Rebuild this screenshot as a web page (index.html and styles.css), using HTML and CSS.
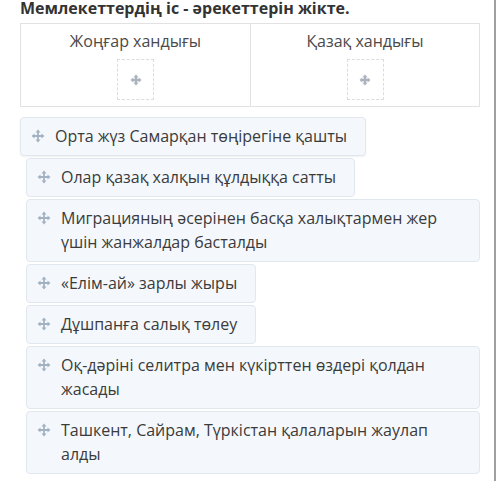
FILE: index.html
```html
<!DOCTYPE html>
<html lang="kk">
<head>
    <meta charset="UTF-8">
    <meta name="viewport" content="width=device-width, initial-scale=1.0">
    <title>Мемлекеттердің іс - әрекеттерін жікте</title>
    <link rel="stylesheet" href="styles.css">
</head>
<body>
    <div class="page">
        <h1 class="question">Мемлекеттердің іс - әрекеттерін жікте.</h1>

        <!-- Категориялар -->
        <div class="categories">
            <div class="category">
                <div class="category-title">Жоңғар хандығы</div>
                <div class="drop-zone">
                    <svg class="drop-icon" viewBox="0 0 12 12"><path d="M6 0.5 L8.5 3.2 H3.5 Z M6 11.5 L3.5 8.8 H8.5 Z M0.5 6 L3.2 3.5 V8.5 Z M11.5 6 L8.8 8.5 V3.5 Z M4.8 3 H7.2 V9 H4.8 Z M3 4.8 H9 V7.2 H3 Z"/></svg>
                </div>
            </div>
            <div class="category">
                <div class="category-title">Қазақ хандығы</div>
                <div class="drop-zone">
                    <svg class="drop-icon" viewBox="0 0 12 12"><path d="M6 0.5 L8.5 3.2 H3.5 Z M6 11.5 L3.5 8.8 H8.5 Z M0.5 6 L3.2 3.5 V8.5 Z M11.5 6 L8.8 8.5 V3.5 Z M4.8 3 H7.2 V9 H4.8 Z M3 4.8 H9 V7.2 H3 Z"/></svg>
                </div>
            </div>
        </div>

        <!-- Жауаптар -->
        <div class="items">
            <div class="item dragging">
                <svg class="move" viewBox="0 0 14 14"><path d="M7 0.5 L9.5 3.5 H4.5 Z M7 13.5 L4.5 10.5 H9.5 Z M0.5 7 L3.5 4.5 V9.5 Z M13.5 7 L10.5 9.5 V4.5 Z M6.1 3.5 H7.9 V10.5 H6.1 Z M3.5 6.1 H10.5 V7.9 H3.5 Z"/></svg>
                <span>Орта жүз Самарқан төңірегіне қашты</span>
            </div>
            <div class="item">
                <svg class="move" viewBox="0 0 14 14"><path d="M7 0.5 L9.5 3.5 H4.5 Z M7 13.5 L4.5 10.5 H9.5 Z M0.5 7 L3.5 4.5 V9.5 Z M13.5 7 L10.5 9.5 V4.5 Z M6.1 3.5 H7.9 V10.5 H6.1 Z M3.5 6.1 H10.5 V7.9 H3.5 Z"/></svg>
                <span>Олар қазақ халқын құлдыққа сатты</span>
            </div>
            <div class="item wide">
                <svg class="move" viewBox="0 0 14 14"><path d="M7 0.5 L9.5 3.5 H4.5 Z M7 13.5 L4.5 10.5 H9.5 Z M0.5 7 L3.5 4.5 V9.5 Z M13.5 7 L10.5 9.5 V4.5 Z M6.1 3.5 H7.9 V10.5 H6.1 Z M3.5 6.1 H10.5 V7.9 H3.5 Z"/></svg>
                <span>Миграцияның әсерінен басқа халықтармен жер үшін жанжалдар басталды</span>
            </div>
            <div class="item">
                <svg class="move" viewBox="0 0 14 14"><path d="M7 0.5 L9.5 3.5 H4.5 Z M7 13.5 L4.5 10.5 H9.5 Z M0.5 7 L3.5 4.5 V9.5 Z M13.5 7 L10.5 9.5 V4.5 Z M6.1 3.5 H7.9 V10.5 H6.1 Z M3.5 6.1 H10.5 V7.9 H3.5 Z"/></svg>
                <span>«Елім-ай» зарлы жыры</span>
            </div>
            <div class="item">
                <svg class="move" viewBox="0 0 14 14"><path d="M7 0.5 L9.5 3.5 H4.5 Z M7 13.5 L4.5 10.5 H9.5 Z M0.5 7 L3.5 4.5 V9.5 Z M13.5 7 L10.5 9.5 V4.5 Z M6.1 3.5 H7.9 V10.5 H6.1 Z M3.5 6.1 H10.5 V7.9 H3.5 Z"/></svg>
                <span>Дұшпанға салық төлеу</span>
            </div>
            <div class="item wide">
                <svg class="move" viewBox="0 0 14 14"><path d="M7 0.5 L9.5 3.5 H4.5 Z M7 13.5 L4.5 10.5 H9.5 Z M0.5 7 L3.5 4.5 V9.5 Z M13.5 7 L10.5 9.5 V4.5 Z M6.1 3.5 H7.9 V10.5 H6.1 Z M3.5 6.1 H10.5 V7.9 H3.5 Z"/></svg>
                <span>Оқ-дәріні селитра мен күкірттен өздері қолдан жасады</span>
            </div>
            <div class="item wide">
                <svg class="move" viewBox="0 0 14 14"><path d="M7 0.5 L9.5 3.5 H4.5 Z M7 13.5 L4.5 10.5 H9.5 Z M0.5 7 L3.5 4.5 V9.5 Z M13.5 7 L10.5 9.5 V4.5 Z M6.1 3.5 H7.9 V10.5 H6.1 Z M3.5 6.1 H10.5 V7.9 H3.5 Z"/></svg>
                <span>Ташкент, Сайрам, Түркістан қалаларын жаулап алды</span>
            </div>
        </div>
    </div>
</body>
</html>
```

FILE: styles.css
```css
body {
    margin: 0;
    background-color: #ffffff;
    font-family: "Open Sans", "Noto Sans", sans-serif;
    color: #3b3b3b;
}

.page {
    width: 460px;
    min-height: 481px;
    padding: 0 14px 0 20px;
    border-right: 2px solid #a0a0a0;
    overflow: hidden;
}

.question {
    margin: -3px 0 0 0;
    font-size: 16px;
    line-height: 22px;
    font-weight: 700;
    color: #333333;
}

.categories {
    display: grid;
    grid-template-columns: 1fr 1fr;
    margin-top: 4px;
    border: 1px solid #e2e2e2;
}

.category {
    display: flex;
    flex-direction: column;
    align-items: center;
    padding: 5px 0 6px 0;
}

.category + .category {
    border-left: 1px solid #e2e2e2;
}

.category-title {
    font-size: 16px;
    line-height: 24px;
    color: #4a4a4a;
}

.drop-zone {
    width: 35px;
    height: 39px;
    margin-top: 6px;
    border: 1px dashed #dcdcdc;
    display: flex;
    align-items: center;
    justify-content: center;
}

.drop-icon {
    width: 12px;
    height: 12px;
    fill: #aab3be;
}

.items {
    display: flex;
    flex-direction: column;
    align-items: flex-start;
    gap: 2px;
    margin-top: 10px;
    padding-left: 6px;
}

.item {
    display: flex;
    align-items: flex-start;
    max-width: 100%;
    box-sizing: border-box;
    padding: 6px 18px 7px 10px;
    background-color: #f4f8fc;
    border: 1px solid #e1e7ee;
    border-radius: 4px;
    font-size: 16px;
    line-height: 24px;
    color: #3b3b3b;
}

.item.wide {
    width: 100%;
}

.item.dragging {
    margin-left: -6px;
    box-shadow: 0 1px 2px rgba(0, 0, 0, 0.06);
}

.move {
    flex: none;
    width: 14px;
    height: 14px;
    margin: 5px 10px 0 0;
    fill: #a3b2c2;
}
```
